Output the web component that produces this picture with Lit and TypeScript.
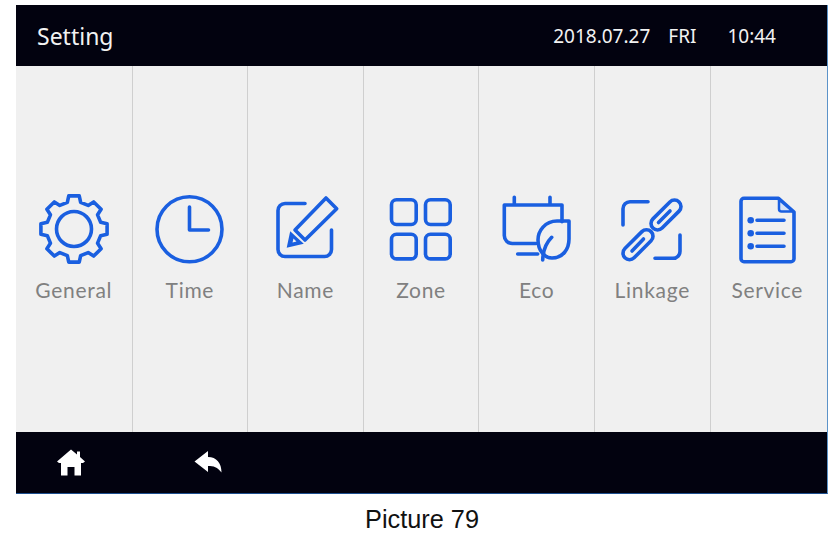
import { LitElement, html, css, svg } from "lit";
import { customElement } from "lit/decorators.js";

function gearPath(cx: number, cy: number): string {
  const teeth = 8;
  const pts: string[] = [];
  const P = (r: number, a: number) => {
    const t = ((a - 90) * Math.PI) / 180;
    return `${(cx + r * Math.cos(t)).toFixed(2)} ${(cy + r * Math.sin(t)).toFixed(2)}`;
  };
  for (let i = 0; i < teeth; i++) {
    const a = (360 / teeth) * i;
    pts.push(`${i === 0 ? "M" : "L"}${P(27.5, a - 14)}`);
    pts.push(`L${P(33.5, a - 9)}`);
    pts.push(`L${P(33.5, a + 9)}`);
    pts.push(`L${P(27.5, a + 14)}`);
  }
  return pts.join(" ") + " Z";
}

const ICONS = {
  gear: svg`<path d=${gearPath(40, 40)}/><circle cx="40" cy="40" r="17.5"/>`,
  clock: svg`<circle cx="39.5" cy="40.3" r="32.5"/><path d="M39.5 18V41H58.5"/>`,
  name: svg`<path d="M40 14.5H20a7 7 0 0 0-7 7V60.5a7 7 0 0 0 7 7H59.5a7 7 0 0 0 7-7V41"/>
    <path d="M30 41 61 9l10.7 10.8L40 51Z"/>
    <path class="solid" fill-rule="evenodd" d="M21.7 58.7 25.2 42.2 38.8 54.8ZM27.5 53.5 31.5 52.5 28.5 49.500Z"/>`,
  zone: svg`<rect x="10.5" y="10.8" width="24.7" height="24.7" rx="5"/><rect x="44.5" y="10.8" width="24.7" height="24.7" rx="5"/>
    <rect x="10.5" y="45.2" width="24.7" height="24.7" rx="5"/><rect x="44.5" y="45.2" width="24.7" height="24.7" rx="5"/>`,
  eco: svg`<path d="M17.3 8.3V16M53 8.3V16M65 32.7V16H7.3V46.500a8 8 0 0 0 8 8H39M20.7 65H40.7"/>
    <path d="M72 32H60C48 32 41 42 41 51 41 62 48 69 55 69 66 69 72 60 72 50Z"/>
    <path d="M54.7 48.3C49 54 46 62 45.7 71"/>`,
  link: svg`<path d="M36 12.7H18a7 7 0 0 0-7 7V36M68 46V62a7 7 0 0 1-7 7.3H43"/>
    <rect x="35.500" y="19.500" width="37" height="13" rx="6.500" transform="rotate(-45 54 26)"/>
    <rect x="7.500" y="49.200" width="37" height="13" rx="6.500" transform="rotate(-45 26 55.700)"/>
    <path d="M46.500 33.500 58 22M20 62 31.500 50"/>`,
  doc: svg`<path d="M51.500 9.300H17a3 3 0 0 0-3 3V69.700a3 3 0 0 0 3 3H64a3 3 0 0 0 3-3V23Z"/>
    <path class="fold" d="M52 10.500V20a2.500 2.500 0 0 0 2.500 2.500H66Z"/>
    <circle class="solid" cx="23.700" cy="31.300" r="3.300"/><circle class="solid" cx="23.700" cy="44.300" r="3.300"/><circle class="solid" cx="23.700" cy="57.300" r="3.300"/>
    <path d="M30 31.300H57M30 44.300H57M30 57.300H57"/>`,
};

const ITEMS: { label: string; icon: keyof typeof ICONS }[] = [
  { label: "General", icon: "gear" },
  { label: "Time", icon: "clock" },
  { label: "Name", icon: "name" },
  { label: "Zone", icon: "zone" },
  { label: "Eco", icon: "eco" },
  { label: "Linkage", icon: "link" },
  { label: "Service", icon: "doc" },
];

@customElement("app-root")
export class AppRoot extends LitElement {
  static styles = css`
    :host {
      display: block;
      width: 838px;
      height: 538px;
      background: #fff;
      font-family: "Open Sans", "Liberation Sans", sans-serif;
      overflow: hidden;
    }
    .page {
      display: flex;
      flex-direction: column;
      padding: 5px 10px 0 16px;
    }
    .frame {
      display: flex;
      flex-direction: column;
      height: 489px;
      border-right: 1px solid #5b93c9;
      border-bottom: 1px solid #1d4f8f;
      box-sizing: border-box;
    }
    .top {
      height: 61px;
      background: #02020f;
      display: flex;
      align-items: center;
      color: #f2f2f2;
      padding: 0 51px 0 21px;
      flex: none;
    }
    .title {
      font-size: 23px;
      flex: 1;
      font-family: "Noto Sans", sans-serif;
    }
    .clock {
      display: flex;
      font-size: 19px;
      font-family: "Noto Sans", sans-serif;
    }
    .day { margin: 0 31px 0 18px; }
    .grid {
      flex: 1;
      display: grid;
      grid-template-columns: repeat(6, 115.6px) 1fr;
      background: #f0f0f0;
    }
    .cell {
      display: flex;
      flex-direction: column;
      align-items: center;
      padding-top: 123px;
      border-left: 1px solid #cfcfcf;
      box-sizing: border-box;
    }
    .cell:first-child { border-left: none; }
    .cell:last-child { padding-right: 3px; }
    .icon {
      width: 80px;
      height: 80px;
      fill: none;
      stroke: #1a5fe0;
      stroke-width: 3.600;
      stroke-linecap: round;
      stroke-linejoin: round;
    }
    .icon .solid { fill: #1a5fe0; stroke: none; }
    .icon .fold { fill: #d5e2f8; stroke-width: 2.500; }
    .label {
      font-family: "Lato", sans-serif;
      font-size: 21px;
      letter-spacing: 0.7px;
      color: #808080;
      line-height: 28px;
      margin-top: 7px;
    }
    .bottom {
      height: 61px;
      flex: none;
      background: #02020f;
      display: flex;
      align-items: center;
      padding-left: 40px;
      gap: 107px;
    }
    .nav { width: 30px; height: 30px; fill: #fff; }
    .caption {
      text-align: center;
      font-family: "Liberation Sans", Arial, sans-serif;
      font-size: 25.300px;
      line-height: 30px;
      color: #111;
      padding: 10px 0 0 0;
      width: 812px;
    }
  `;

  render() {
    return html`
      <div class="page">
        <div class="frame">
          <div class="top">
            <div class="title">Setting</div>
            <div class="clock"><span>2018.07.27</span><span class="day">FRI</span><span>10:44</span></div>
          </div>
          <div class="grid">
            ${ITEMS.map(
              (it) => html`<div class="cell">
                <svg class="icon" viewBox="0 0 80 80">${ICONS[it.icon]}</svg>
                <div class="label">${it.label}</div>
              </div>`
            )}
          </div>
          <div class="bottom">
            <svg class="nav" viewBox="0 0 30 30">
              <path d="M15 1.500 21 6.500V3.500H24V9L29 13.500 27 15H25V27.500H18.500V19H11.500V27.500H5V15H3L1 13.500Z"/>
            </svg>
            <svg class="nav" viewBox="0 0 30 30">
              <path d="M1.500 13.500 15 3V9C23.500 9 28.500 15 28.500 24.500 24.500 19 20.500 18 15 18V24Z"/>
            </svg>
          </div>
        </div>
        <div class="caption">Picture 79</div>
      </div>
    `;
  }
}
